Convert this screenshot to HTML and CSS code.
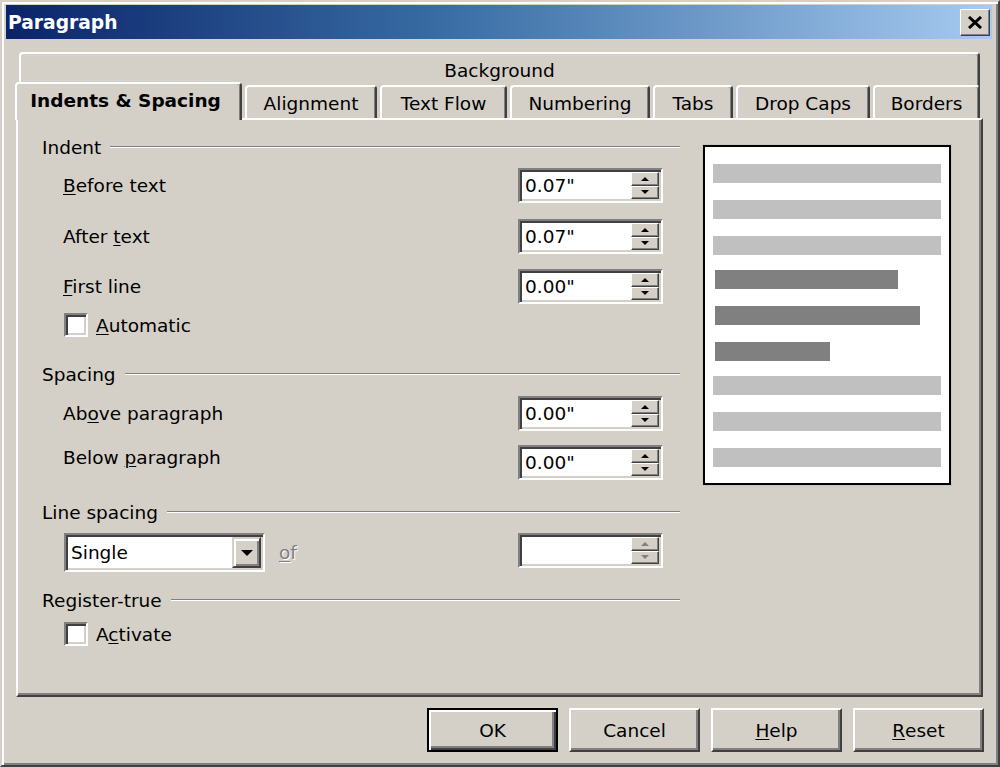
FILE: index.html
```html
<!DOCTYPE html>
<html>
<head>
<meta charset="utf-8">
<title>Paragraph</title>
<link rel="stylesheet" href="styles.css">
</head>
<body>
<div class="window">
  <div class="titlebar">
    <span class="title">Paragraph</span>
    <div class="close">
      <svg width="16" height="13" viewBox="0 0 16 13"><path d="M2 1 L14 12 M14 1 L2 12" stroke="#000" stroke-width="3" fill="none"/></svg>
    </div>
  </div>
  <div class="body">
    <div class="tabs">
      <div class="tab-row-back">
        <div class="tab back">Background</div>
      </div>
      <div class="tab-row-front">
        <div class="tab selected">Indents &amp; Spacing</div>
        <div class="tab">Alignment</div>
        <div class="tab">Text Flow</div>
        <div class="tab">Numbering</div>
        <div class="tab">Tabs</div>
        <div class="tab">Drop Caps</div>
        <div class="tab">Borders</div>
      </div>
    </div>
    <div class="panel">
      <div class="form">
        <div class="section s-indent"><span>Indent</span><i class="rule"></i></div>
        <div class="field f-before">
          <span class="label"><u>B</u>efore text</span>
          <div class="spin"><span class="spin-value">0.07"</span><div class="spin-btns"><div class="spin-btn up"></div><div class="spin-btn down"></div></div></div>
        </div>
        <div class="field f-after">
          <span class="label">After <u>t</u>ext</span>
          <div class="spin"><span class="spin-value">0.07"</span><div class="spin-btns"><div class="spin-btn up"></div><div class="spin-btn down"></div></div></div>
        </div>
        <div class="field f-first">
          <span class="label"><u>F</u>irst line</span>
          <div class="spin"><span class="spin-value">0.00"</span><div class="spin-btns"><div class="spin-btn up"></div><div class="spin-btn down"></div></div></div>
        </div>
        <div class="check c-auto"><span class="box"></span><span class="label"><u>A</u>utomatic</span></div>

        <div class="section s-spacing"><span>Spacing</span><i class="rule"></i></div>
        <div class="field f-above">
          <span class="label">Ab<u>o</u>ve paragraph</span>
          <div class="spin"><span class="spin-value">0.00"</span><div class="spin-btns"><div class="spin-btn up"></div><div class="spin-btn down"></div></div></div>
        </div>
        <div class="field f-below">
          <span class="label label-high">Below <u>p</u>aragraph</span>
          <div class="spin"><span class="spin-value">0.00"</span><div class="spin-btns"><div class="spin-btn up"></div><div class="spin-btn down"></div></div></div>
        </div>

        <div class="section s-line"><span>Line spacing</span><i class="rule"></i></div>
        <div class="line-row">
          <div class="combo"><span class="combo-value">Single</span><div class="combo-btn"></div></div>
          <span class="of"><u>o</u>f</span>
          <div class="spin disabled"><span class="spin-value"></span><div class="spin-btns"><div class="spin-btn up"></div><div class="spin-btn down"></div></div></div>
        </div>

        <div class="section s-reg"><span>Register-true</span><i class="rule"></i></div>
        <div class="check c-act"><span class="box"></span><span class="label">A<u>c</u>tivate</span></div>
      </div>

      <div class="preview">
        <div class="bar light"></div>
        <div class="bar light"></div>
        <div class="bar light"></div>
        <div class="bar dark group-start" style="width:183px"></div>
        <div class="bar dark" style="width:205px"></div>
        <div class="bar dark" style="width:115px"></div>
        <div class="bar light group-start"></div>
        <div class="bar light"></div>
        <div class="bar light"></div>
      </div>
    </div>
  </div>
  <div class="buttons">
    <div class="btn default">OK</div>
    <div class="btn">Cancel</div>
    <div class="btn"><u>H</u>elp</div>
    <div class="btn"><u>R</u>eset</div>
  </div>
</div>
</body>
</html>
```

FILE: styles.css
```css
* { box-sizing: border-box; }

html, body {
  margin: 0;
  padding: 0;
  background: #d4d0c8;
}

body {
  font-family: "DejaVu Sans", Verdana, sans-serif;
  font-size: 18.5px;
  color: #000;
}

u {
  text-decoration: underline;
  text-underline-offset: 2px;
  text-decoration-thickness: 1px;
}

.window {
  width: 1000px;
  height: 767px;
  display: flex;
  flex-direction: column;
  background: #d4d0c8;
  border-style: solid;
  border-width: 2px;
  border-color: #d4d0c8 #404040 #404040 #d4d0c8;
  box-shadow: inset 2px 2px #fff, inset -2px -2px #808080;
  padding: 3px 6px 0 4px;
}

/* Title bar */
.titlebar {
  height: 34px;
  flex: none;
  display: flex;
  align-items: center;
  justify-content: space-between;
  background: linear-gradient(to right, #0a246a 0%, #3a6ea5 45%, #a6caf0 100%);
  padding: 0 2px 0 2px;
}

.title {
  color: #fff;
  font-weight: bold;
  font-size: 18.7px;
}

.close {
  width: 30px;
  height: 27px;
  background: #d4d0c8;
  border-style: solid;
  border-width: 1px;
  border-color: #fff #404040 #404040 #fff;
  box-shadow: inset -1px -1px #808080;
  display: flex;
  align-items: center;
  justify-content: center;
}

/* Body */
.body {
  flex: none;
  display: flex;
  flex-direction: column;
  padding: 13px 9px 0 10px;
}

.tabs {
  display: flex;
  flex-direction: column;
}

.tab-row-back {
  height: 33px;
  display: flex;
  padding: 0 3px;
}

.tab {
  display: flex;
  align-items: center;
  justify-content: center;
  background: #d4d0c8;
  border-style: solid;
  border-width: 2px 2px 0 2px;
  border-color: #fff #404040 transparent #fff;
  border-radius: 4px 4px 0 0;
  box-shadow: inset -1px 0 #808080;
  white-space: nowrap;
  padding-top: 1px;
}

.tab.back {
  flex: 1;
  height: 36px;
  padding-bottom: 2px;
}

.tab-row-front {
  height: 33px;
  display: grid;
  grid-template-columns: 226px 132px 127px 140px 80px 134px 107px;
  column-gap: 3px;
  position: relative;
  z-index: 1;
}

.tab-row-front .tab {
  height: 33px;
}

.tab.selected {
  font-weight: bold;
  height: 38px;
  margin-top: -3px;
  margin-left: -1px;
  position: relative;
  z-index: 2;
  padding-bottom: 4px;
  padding-right: 6px;
}

/* Panel */
.panel {
  width: 967px;
  height: 579px;
  display: flex;
  align-items: flex-start;
  border-style: solid;
  border-width: 2px;
  border-color: #fff #404040 #404040 #fff;
  box-shadow: inset -2px -2px #808080;
  padding: 15px 0 0 24px;
}

.form {
  width: 638px;
  display: flex;
  flex-direction: column;
}

.section {
  height: 24px;
  display: flex;
  align-items: center;
}

.rule {
  flex: 1;
  height: 2px;
  margin-left: 9px;
  border-top: 1px solid #808080;
  border-bottom: 1px solid #fff;
}

.field {
  display: grid;
  grid-template-columns: 455px 145px;
  align-items: center;
  padding-left: 21px;
}

.label-high { margin-top: -10px; }

.f-before { margin-top: 9px; }
.f-after { margin-top: 16px; }
.f-first { margin-top: 15px; }
.c-auto { margin-top: 9px; }
.s-spacing { margin-top: 25px; }
.f-above { margin-top: 10px; }
.f-below { margin-top: 14px; }
.s-line { margin-top: 20px; }
.line-row { margin-top: 9px; }
.s-reg { margin-top: 16px; }
.c-act { margin-top: 10px; }

/* Spin box */
.spin {
  width: 145px;
  height: 35px;
  display: flex;
  background: #fff;
  border-style: solid;
  border-width: 2px;
  border-color: #808080 #fff #fff #808080;
  box-shadow: inset 2px 2px #404040, inset -2px -2px #d4d0c8;
  padding: 2px;
}

.spin-value {
  flex: 1;
  display: flex;
  align-items: center;
  padding-left: 3px;
}

.spin-btns {
  width: 28px;
  display: flex;
  flex-direction: column;
}

.spin-btn {
  flex: 1;
  background: #d4d0c8;
  border-style: solid;
  border-width: 1px;
  border-color: #fff #404040 #404040 #fff;
  box-shadow: inset -1px -1px #808080;
  display: flex;
  align-items: center;
  justify-content: center;
}

.spin-btn.up::after {
  content: "";
  border-left: 4px solid transparent;
  border-right: 4px solid transparent;
  border-bottom: 4px solid #000;
}

.spin-btn.down::after {
  content: "";
  border-left: 4px solid transparent;
  border-right: 4px solid transparent;
  border-top: 4px solid #000;
}

.spin.disabled .spin-btn.up::after { border-bottom-color: #808080; }
.spin.disabled .spin-btn.down::after { border-top-color: #808080; }

/* Checkbox */
.check {
  display: flex;
  align-items: center;
  padding-left: 22px;
}

.box {
  width: 24px;
  height: 24px;
  background: #fff;
  border-style: solid;
  border-width: 2px;
  border-color: #808080 #fff #fff #808080;
  box-shadow: inset 2px 2px #404040, inset -2px -2px #d4d0c8;
}

.check .label {
  margin-left: 8px;
}

/* Line spacing row */
.line-row {
  display: grid;
  grid-template-columns: 201px 1fr 145px;
  column-gap: 14px;
  align-items: start;
  padding: 0 17px 0 22px;
}

.combo {
  width: 201px;
  height: 39px;
  display: flex;
  background: #fff;
  border-style: solid;
  border-width: 2px;
  border-color: #808080 #fff #fff #808080;
  box-shadow: inset 2px 2px #404040, inset -2px -2px #d4d0c8;
  padding: 2px;
}

.combo-value {
  flex: 1;
  display: flex;
  align-items: center;
  padding-left: 3px;
}

.combo-btn {
  width: 29px;
  background: #d4d0c8;
  border-style: solid;
  border-width: 2px;
  border-color: #d4d0c8 #404040 #404040 #d4d0c8;
  box-shadow: inset 2px 2px #fff, inset -2px -2px #808080;
  display: flex;
  align-items: center;
  justify-content: center;
}

.combo-btn::after {
  content: "";
  border-left: 6px solid transparent;
  border-right: 6px solid transparent;
  border-top: 6px solid #000;
}

.of {
  color: #808080;
  text-shadow: 1px 1px #fff;
  height: 39px;
  display: flex;
  align-items: center;
}

/* Preview */
.preview {
  width: 248px;
  height: 340px;
  margin: 10px 0 0 23px;
  background: #fff;
  border: 2px solid #000;
  outline: 1px solid #c8c5be;
  display: flex;
  flex-direction: column;
  gap: 17px;
  padding: 17px 8px 0 8px;
}

.bar {
  height: 19px;
  flex: none;
}

.bar.light {
  background: #c0c0c0;
  width: 228px;
}

.bar.dark {
  background: #808080;
  margin-left: 2px;
}

.bar.group-start {
  margin-top: -2px;
}

/* Buttons */
.buttons {
  flex: none;
  display: flex;
  justify-content: flex-end;
  gap: 11px;
  padding: 11px 8px 0 0;
  height: 66px;
}

.btn {
  width: 131px;
  height: 44px;
  display: flex;
  align-items: center;
  justify-content: center;
  background: #d4d0c8;
  border-style: solid;
  border-width: 2px;
  border-color: #fff #404040 #404040 #fff;
  box-shadow: inset -2px -2px #808080;
}

.btn.default {
  border-color: #000;
  box-shadow: inset 2px 2px #fff, inset -2px -2px #404040, inset -4px -4px #808080;
}
```
